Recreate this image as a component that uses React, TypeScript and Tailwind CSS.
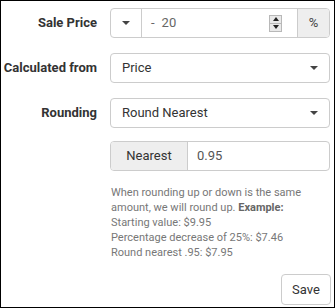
import React from 'react';

const Caret = () => (
  <span className="inline-block w-0 h-0 border-l-[4px] border-r-[4px] border-t-[4px] border-l-transparent border-r-transparent border-t-[#444]" />
);

const Label: React.FC<{ text: string }> = ({ text }) => (
  <div className="w-[96px] shrink-0 text-right font-bold text-[13px] text-[#333] leading-[30px]">{text}</div>
);

const Spinner = () => (
  <div className="w-[13px] h-[17px] flex flex-col border border-[#b8b8b8] bg-[#e9e9e9]">
    <div className="flex-1 flex items-center justify-center border-b border-[#b8b8b8]">
      <span className="w-0 h-0 border-l-[3px] border-r-[3px] border-b-[4px] border-l-transparent border-r-transparent border-b-[#222]" />
    </div>
    <div className="flex-1 flex items-center justify-center">
      <span className="w-0 h-0 border-l-[3px] border-r-[3px] border-t-[4px] border-l-transparent border-r-transparent border-t-[#222]" />
    </div>
  </div>
);

const Select: React.FC<{ value: string }> = ({ value }) => (
  <div className="w-[220px] h-[30px] border border-[#ccc] rounded-[4px] bg-white flex items-center justify-between pl-[11px] pr-[11px] text-[13px] text-[#333]">
    <span>{value}</span>
    <Caret />
  </div>
);

export default function App() {
  return (
    <div
      className="w-[335px] h-[308px] border border-black bg-white pt-[7px] flex flex-col overflow-hidden"
      style={{ fontFamily: 'Roboto, "Liberation Sans", sans-serif' }}
    >
      <div className="flex">
        <Label text="Sale Price" />
        <div className="ml-[13px] w-[220px] h-[30px] border border-[#ccc] rounded-[4px] flex overflow-hidden">
          <div className="w-[31px] flex items-center justify-center border-r border-[#ccc]">
            <Caret />
          </div>
          <div className="flex-1 flex items-center pl-[9px] pr-[15px] text-[13px] text-[#666]">
            <span>-</span>
            <span className="ml-[7px] flex-1">20</span>
            <Spinner />
          </div>
          <div className="w-[32px] bg-[#eee] border-l border-[#ccc] flex items-center justify-center text-[13px] text-[#444]">%</div>
        </div>
      </div>

      <div className="flex mt-[15px]">
        <Label text="Calculated from" />
        <div className="ml-[13px]">
          <Select value="Price" />
        </div>
      </div>

      <div className="flex mt-[15px]">
        <Label text="Rounding" />
        <div className="ml-[13px]">
          <Select value="Round Nearest" />
        </div>
      </div>

      <div className="flex mt-[13px] ml-[109px]">
        <div className="w-[220px] h-[30px] border border-[#ccc] rounded-[4px] flex overflow-hidden text-[13px]">
          <div className="w-[77px] bg-[#eee] border-r border-[#ccc] flex items-center justify-center text-[#333]">Nearest</div>
          <div className="flex-1 flex items-center pl-[9px] text-[#555]">0.95</div>
        </div>
      </div>

      <div className="ml-[110px] mt-[14px] w-[220px] text-[11px] leading-[15px] text-[#777]">
        <p>
          When rounding up or down is the same amount, we will round up. <span className="font-bold text-[#666]">Example:</span>
        </p>
        <p>Starting value: $9.95</p>
        <p>Percentage decrease of 25%: $7.46</p>
        <p>Round nearest .95: $7.95</p>
      </div>

      <div className="flex justify-end pr-[3px] mt-auto mb-[2px]">
        <button className="w-[50px] h-[31px] border border-[#ccc] rounded-[4px] bg-white text-[13px] text-[#333]">Save</button>
      </div>
    </div>
  );
}
